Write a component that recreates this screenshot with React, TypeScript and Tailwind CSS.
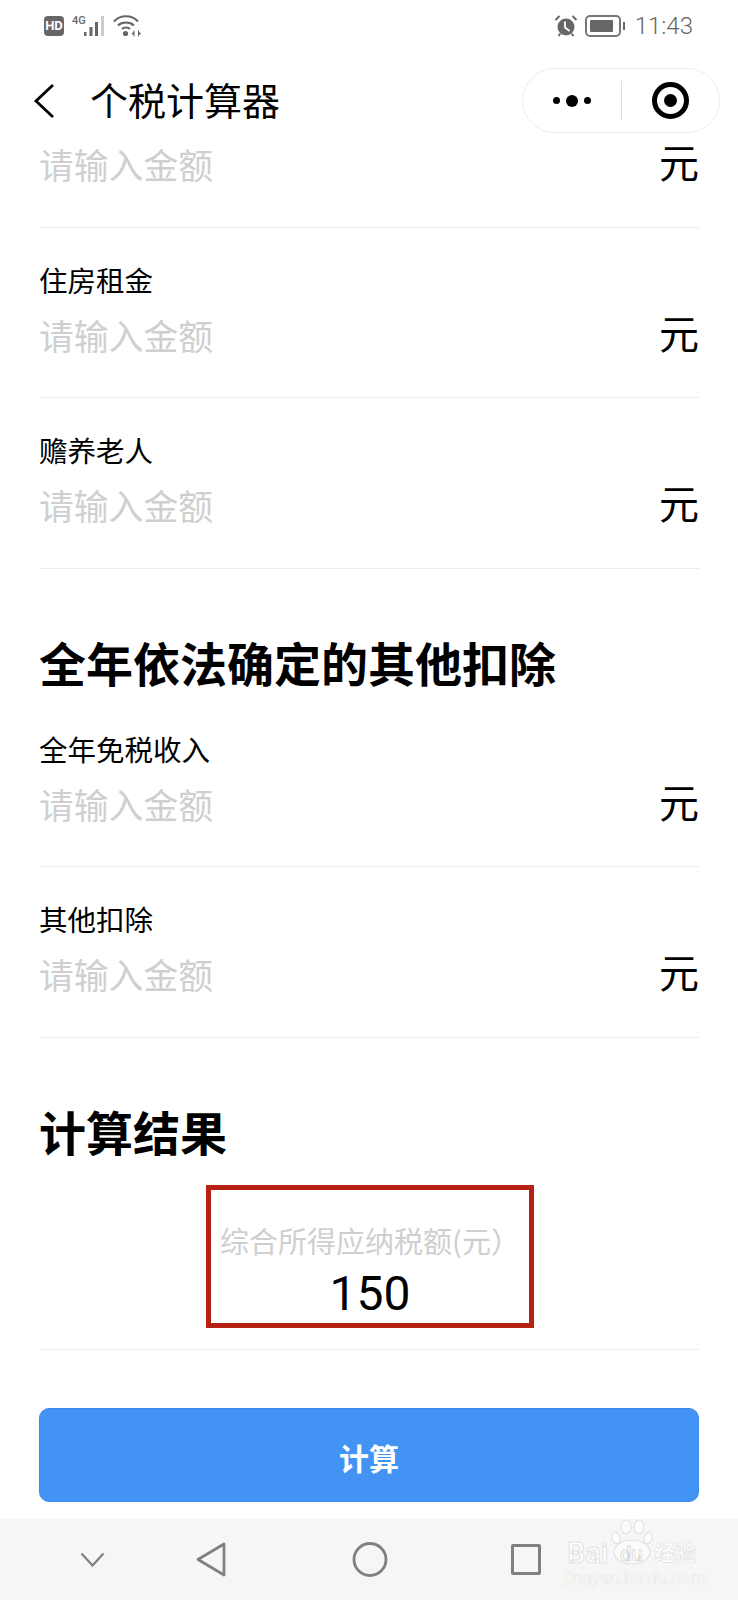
import React from "react";

const CJK = "font-['Noto_Sans_CJK_SC','Noto_Sans',sans-serif]";

function Field({ label, flush }: { label?: string; flush?: boolean }) {
  return (
    <div className={`mx-[39px] border-b border-[#ececec] ${label && !flush ? "pt-[35px]" : ""}`}>
      {label && <div className="h-[45px] text-[28.5px] leading-[34px] text-black">{label}</div>}
      <div className="flex h-[60px] items-center justify-between">
        <span className="pb-[6px] text-[34.8px] leading-[54px] text-[#cfcfcf]">请输入金额</span>
        <span className="pb-[11px] text-[40px] leading-[49px] text-black">元</span>
      </div>
      <div className="h-[29.5px]" />
    </div>
  );
}

function StatusBar() {
  return (
    <div className="flex h-[50px] items-center justify-between pl-[44px] pr-[45px] pt-[1px]">
      <div className="flex items-center">
        <div className="flex h-[20px] w-[20px] items-center justify-center rounded-[4px] bg-[#666] font-['Roboto',sans-serif] text-[13px] font-bold leading-none text-white">
          HD
        </div>
        <div className="relative ml-[8px] h-[20px] w-[34px]">
          <span className="absolute left-0 top-[0px] font-['Roboto',sans-serif] text-[11px] font-medium leading-[10px] text-[#666]">4G</span>
          <svg className="absolute left-0 top-0" width="34" height="20" viewBox="0 0 34 20">
            <rect x="12" y="16" width="2.5" height="4" fill="#666" />
            <rect x="17.5" y="11" width="3" height="9" fill="#666" />
            <rect x="23" y="6" width="3" height="14" fill="#666" />
            <rect x="29" y="0" width="3" height="20" fill="#ccc" />
          </svg>
        </div>
        <svg className="ml-[7px]" width="28" height="22" viewBox="0 0 28 22" fill="none" stroke="#666" strokeWidth="2.2">
          <path d="M1 6.5C7-.5 19-.5 25 6.5M5 10.5c4-4 12-4 16 0M9 14c2-2 6-2 8 0" />
          <circle cx="12.5" cy="18.5" r="2.6" fill="#666" stroke="none" />
          <path d="M21 15.5v6M25.5 15.5v6" strokeWidth="1" />
          <path d="M21 16.5l-2.500 2 2.500 2zM25.500 16.500l2.500 2-2.500 2z" fill="#666" stroke="none" />
        </svg>
      </div>
      <div className="flex items-center">
        <svg width="24" height="22" viewBox="0 0 24 22">
          <circle cx="12" cy="12" r="8.500" fill="#666" />
          <path d="M11 6.500v6l4.500 3.500" stroke="#fff" strokeWidth="1.800" fill="none" />
          <path d="M1.500 5l4-4M22.500 5l-4-4M4.500 21l2-2.500M19.500 21l-2-2.500" stroke="#666" strokeWidth="2" />
        </svg>
        <svg className="ml-[7px]" width="40" height="22" viewBox="0 0 40 22">
          <rect x="1" y="1" width="34" height="20" rx="4" fill="none" stroke="#777" strokeWidth="2" />
          <rect x="5" y="5" width="23" height="12" rx="1" fill="#666" />
          <rect x="38" y="7" width="2" height="8" fill="#666" />
        </svg>
        <span className="ml-[10px] font-['Roboto',sans-serif] text-[24px] font-light leading-none text-[#666]">11:43</span>
      </div>
    </div>
  );
}

function NavBar() {
  return (
    <div className="flex h-[87px] items-center justify-between pl-[33px] pr-[18px] pt-[14px]">
      <div className="flex items-center gap-[35px]">
        <svg width="22" height="36" viewBox="0 0 22 36" fill="none" stroke="#000" strokeWidth="2.800">
          <path d="M20 2 3 18l17 16" />
        </svg>
        <span className="pb-[3px] text-[38px] leading-none text-black">个税计算器</span>
      </div>
      <div className="flex h-[65px] w-[198px] items-center rounded-full border border-[#ececec]">
        <div className="flex w-[98px] items-center justify-center gap-[6px]">
          <span className="h-[7px] w-[7px] rounded-full bg-black" />
          <span className="h-[12px] w-[12px] rounded-full bg-black" />
          <span className="h-[7px] w-[7px] rounded-full bg-black" />
        </div>
        <div className="h-[40px] w-px bg-[#dddddd]" />
        <div className="flex flex-1 items-center justify-center">
          <span className="flex h-[37px] w-[37px] items-center justify-center rounded-full border-[5px] border-black">
            <span className="h-[13px] w-[13px] rounded-full bg-black" />
          </span>
        </div>
      </div>
    </div>
  );
}

// faint Baidu jingyan watermark sits over the nav bar
function Watermark() {
  return (
    <div className="absolute left-[564px] top-0 h-[81px] w-[136px] text-white">
      <svg className="absolute left-[46px] top-0" width="44" height="46" viewBox="0 0 44 46" fill="#fbfbfb" stroke="#e2e2e2" strokeWidth="1.2">
        <ellipse cx="6" cy="19" rx="4" ry="6" transform="rotate(-20 6 19)" />
        <ellipse cx="16" cy="8" rx="5" ry="7" />
        <ellipse cx="29" cy="8" rx="5" ry="7" />
        <ellipse cx="38" cy="19" rx="4" ry="6" transform="rotate(20 38 19)" />
        <ellipse cx="22" cy="33" rx="18" ry="12" />
      </svg>
      <span className="absolute left-[3px] top-[18px] font-['Roboto',sans-serif] text-[29px] font-medium leading-[32px] text-white [-webkit-text-stroke:1px_#e2e2e2]">Bai</span>
      <span className="absolute left-[56px] top-[24px] font-['Roboto',sans-serif] text-[20px] font-medium leading-[22px] text-white [-webkit-text-stroke:0.8px_#d8d8d8]">du</span>
      <span className="absolute left-[90px] top-[20px] text-[21px] font-bold leading-[24px] text-white [-webkit-text-stroke:0.6px_#e0e0e0]">经验</span>
      <span className="absolute left-0 top-[50px] whitespace-nowrap font-['Roboto',sans-serif] text-[17.500px] leading-[18px] text-white [-webkit-text-stroke:0.5px_#e6e6e6]">jingyan.baidu.com</span>
    </div>
  );
}

function BottomBar() {
  return (
    <div className="relative h-[81px] bg-[#f6f6f6]">
      <svg className="absolute left-[80px] top-[33px]" width="25" height="15" viewBox="0 0 25 15" fill="none" stroke="#808080" strokeWidth="2.200">
        <path d="M1.500 1.500l11 12 11-12" />
      </svg>
      <svg className="absolute left-[195px] top-[23px]" width="32" height="35" viewBox="0 0 32 35" fill="none" stroke="#808080" strokeWidth="2.800" strokeLinejoin="round">
        <path d="M29 2v31L3 17.500z" />
      </svg>
      <svg className="absolute left-[352px] top-[23px]" width="36" height="35" viewBox="0 0 36 35" fill="none" stroke="#808080" strokeWidth="2.800">
        <circle cx="18" cy="17.500" r="16" />
      </svg>
      <div className="absolute left-[511px] top-[25px] h-[31px] w-[30px] rounded-[2px] border-[3px] border-[#808080]" />
      <Watermark />
    </div>
  );
}

export default function App() {
  return (
    <div className={`flex h-[1600px] w-[738px] flex-col overflow-hidden bg-white ${CJK}`}>
      <StatusBar />
      <NavBar />
      <Field />
      <Field label="住房租金" />
      <Field label="赡养老人" />
      <h2 className="mb-[35px] ml-[39px] mt-[58px] text-[47px] font-bold leading-[70px] text-black">全年依法确定的其他扣除</h2>
      <Field label="全年免税收入" flush />
      <Field label="其他扣除" />
      <h2 className="mb-[19px] ml-[39px] mt-[58px] text-[47px] font-bold leading-[70px] text-black">计算结果</h2>
      <div className="mx-[39px] border-b border-[#ececec] pb-[21px]">
        <div className="ml-[167px] flex h-[143px] w-[328px] flex-col items-center border-[5px] border-[#b72114] pt-[28px]">
          <div className="whitespace-nowrap text-[29px] leading-[44px] text-[#cfcfcf]">综合所得应纳税额(元）</div>
          <div className="mt-[7px] font-['Roboto',sans-serif] text-[48px] leading-[50px] text-black">150</div>
        </div>
      </div>
      <button className="mx-[39px] mt-[58px] h-[94px] rounded-[10px] border border-[#3b8aea] bg-[#4293f3] pt-[6px] text-[30px] font-bold text-white">计算</button>
      <div className="flex-1" />
      <BottomBar />
    </div>
  );
}
